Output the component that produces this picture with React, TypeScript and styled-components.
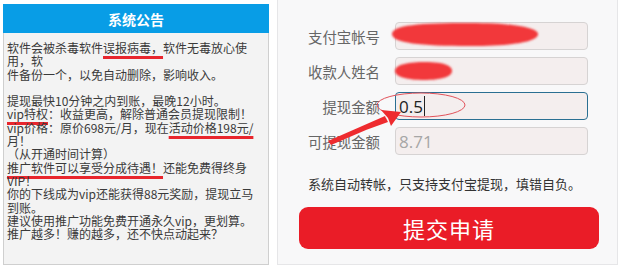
import styled, { createGlobalStyle } from 'styled-components';

const GlobalStyle = createGlobalStyle`
	html, body {
		margin: 0;
		padding: 0;
		background: #ffffff;
	}
	body {
		font-family: "Noto Sans CJK SC", "Noto Sans", sans-serif;
	}
`;

const fields = [
	{ label: '支付宝帐号', value: '', focused: false, muted: false },
	{ label: '收款人姓名', value: '', focused: false, muted: false },
	{ label: '提现金额', value: '0.5', focused: true, muted: false },
	{ label: '可提现金额', value: '8.71', focused: false, muted: true },
];

export default function App() {
	return (
		<>
			<GlobalStyle />
			<Page>
				<Notice>
					<NoticeHeader>系统公告</NoticeHeader>
					<NoticeBody>
						<Line>
							软件会被杀毒软件<Mark>误报病毒，</Mark>软件无毒放心使
						</Line>
						<Line>用，软</Line>
						<Line>件备份一个，以免自动删除，影响收入。</Line>
						<Line />
						<Line>提现最快10分钟之内到账，最晚12小时。</Line>
						<Line>
							<Mark>vip特权</Mark>：收益更高，解除普通会员提现限制！
						</Line>
						<Line>
							vip价格：原价698元/月，现在<Mark>活动价格198元/</Mark>
						</Line>
						<Line>月！</Line>
						<Line>（从开通时间计算）</Line>
						<Line>
							<Mark>推广软件可以享受分成待遇！</Mark>还能免费得终身
						</Line>
						<Line>VIP！</Line>
						<Line>你的下线成为vip还能获得88元奖励，提现立马</Line>
						<Line>到账。</Line>
						<Line>建议使用推广功能免费开通永久vip，更划算。</Line>
						<Line>推广越多！赚的越多，还不快点动起来？</Line>
					</NoticeBody>
				</Notice>

				<FormPanel>
					<Fields>
						{fields.map(f => (
							<Row key={f.label}>
								<Label>{f.label}</Label>
								<Input $focused={f.focused} $muted={f.muted}>
									{f.value}
									{f.focused && <Caret />}
								</Input>
							</Row>
						))}
					</Fields>
					<Hint>系统自动转帐，只支持支付宝提现，填错自负。</Hint>
					<SubmitButton>提交申请</SubmitButton>

					<Annotations width="341" height="265" viewBox="277 0 341 265">
						<defs>
							<filter id="blur" x="-20%" y="-50%" width="140%" height="200%">
								<feGaussianBlur stdDeviation="0.8" />
							</filter>
						</defs>
						<g filter="url(#blur)" fill="#f2383a">
							<path d="M392 34 C392 25 420 23 470 23 C515 23 538 28 538 34 C538 42 512 46 470 46 C420 46 392 43 392 34 Z" />
							<path d="M395 71 C395 64 410 62 425 62 C445 62 452 66 452 71 C452 77 440 80 424 80 C408 80 395 77 395 71 Z" />
						</g>
						<ellipse cx="421" cy="105" rx="44" ry="12" fill="none" stroke="#e2525a" strokeWidth="1" />
						<path d="M330 143 L386 118 L388 122 Z M328 141 L385 116 L387 121 L331 145 Z" fill="#ee2b2f" />
						<path d="M401 112 L381 110 L388 118 L391 126 Z" fill="#ee2b2f" />
					</Annotations>
				</FormPanel>
			</Page>
		</>
	);
}

const Page = styled.div`
	display: flex;
	flex-direction: row;
	align-items: flex-start;
	gap: 8px;
	padding-left: 3px;
	width: 622px;
	height: 268px;
	box-sizing: border-box;
`;

const Notice = styled.div`
	margin-top: 4px;
	width: 266px;
	height: 261px;
	box-sizing: border-box;
	background: #f3f3f3;
	border: 1px solid #cfcfcf;
	border-top: none;
	display: flex;
	flex-direction: column;
`;

const NoticeHeader = styled.div`
	height: 29px;
	margin: 0 -1px;
	background: #089de6;
	color: #ffffff;
	font-size: 14px;
	font-weight: bold;
	display: flex;
	align-items: center;
	justify-content: center;
`;

const NoticeBody = styled.div`
	padding: 8px 0 0 3px;
	font-size: 12px;
	line-height: 13.3px;
	color: #3a3a3a;
	white-space: nowrap;
`;

const Line = styled.div`
	height: 13.3px;
`;

const Mark = styled.span`
	text-decoration: underline;
	text-decoration-color: #e8262d;
	text-decoration-thickness: 3px;
	text-underline-offset: 3px;
`;

const FormPanel = styled.div`
	position: relative;
	width: 341px;
	height: 265px;
	box-sizing: border-box;
	background: #f8f8f9;
	border: 1px solid #e6e6e8;
	border-top: none;
	display: flex;
	flex-direction: column;
	padding-top: 22px;
`;

const Fields = styled.div`
	display: flex;
	flex-direction: column;
	gap: 7px;
`;

const Row = styled.div`
	display: flex;
	flex-direction: row;
	align-items: center;
	gap: 15px;
`;

const Label = styled.div`
	width: 102px;
	text-align: right;
	font-size: 14.4px;
	color: #666666;
`;

const Input = styled.div<{ $focused: boolean; $muted: boolean }>`
	width: 193px;
	height: 28px;
	box-sizing: border-box;
	border: 1px solid ${p => (p.$focused ? '#2a6f92' : '#d6d3d3')};
	border-radius: 4px;
	background: #f4eeee;
	padding-left: 3px;
	display: flex;
	align-items: center;
	font-family: "Open Sans", "Noto Sans", sans-serif;
	font-size: 17px;
	color: ${p => (p.$muted ? '#a6a6a6' : '#222222')};
`;

const Caret = styled.span`
	display: inline-block;
	width: 1px;
	height: 20px;
	margin-left: 1px;
	background: #222222;
`;

const Hint = styled.div`
	margin-top: 20px;
	padding-left: 30px;
	height: 18px;
	line-height: 18px;
	font-size: 13px;
	color: #333333;
`;

const SubmitButton = styled.button`
	margin-top: 14px;
	margin-left: 21px;
	width: 300px;
	height: 42px;
	border: none;
	border-radius: 9px;
	background: #ea1c27;
	color: #ffffff;
	font-family: "Noto Sans CJK SC", sans-serif;
	font-size: 22px;
	letter-spacing: 1px;
	padding: 0;
`;

const Annotations = styled.svg`
	position: absolute;
	left: -1px;
	top: 0;
	pointer-events: none;
`;
